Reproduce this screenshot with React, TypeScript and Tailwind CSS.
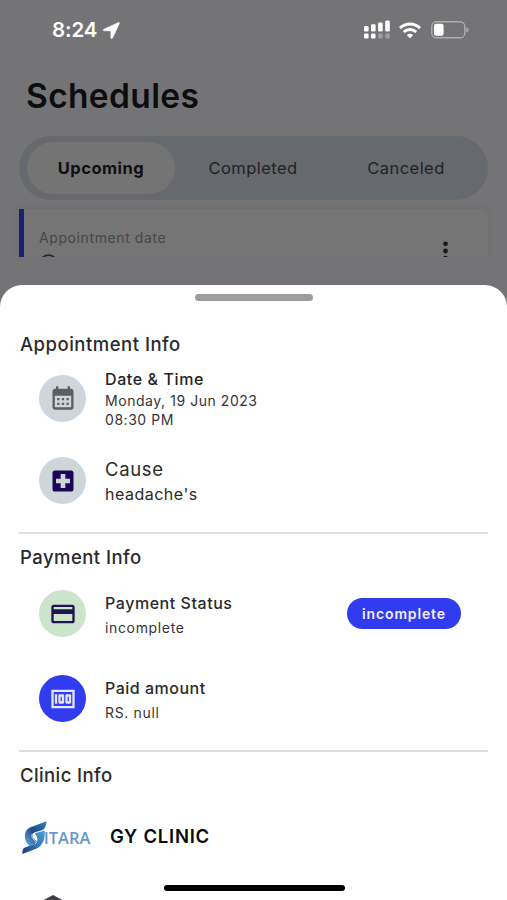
import type { ReactNode } from 'react'
import { MdCalendarMonth, MdLocalHospital, MdMoney, MdPayment } from 'react-icons/md'

const TABS = ['Upcoming', 'Completed', 'Canceled']

function StatusBar() {
  return (
    <div className="flex h-[60px] shrink-0 items-center justify-between pl-[52px] pr-[38px] text-white">
      <div className="flex items-center gap-1.5">
        <span className="text-[20.5px] font-semibold leading-none tracking-[-0.1px]">8:24</span>
        <svg width="17" height="17" viewBox="0 0 17 17" fill="currentColor" stroke="currentColor" strokeWidth=".6">
          <path d="M15.4.6.9 7.2c-1 .5-.8 1.6.3 1.6h6.7v6.8c0 1.1 1.2 1.3 1.7.3L16.3 1.5c.3-.7-.2-1.2-.9-.9Z" />
        </svg>
      </div>
      <div className="flex items-center">
        <svg width="27" height="20" viewBox="0 0 27 20" fill="currentColor">
          <rect x="1" y="6" width="4.6" height="5.6" rx="1.3" />
          <rect x="8" y="4.2" width="4.6" height="7.4" rx="1.3" />
          <rect x="15.1" y="2.4" width="4.6" height="9.2" rx="1.3" />
          <rect x="22.2" y="0.5" width="4.6" height="11.1" rx="1.3" />
          <rect x="1" y="13.6" width="4.6" height="5" rx="1.3" />
          <rect x="8" y="13.6" width="4.6" height="5" rx="1.3" />
          <rect x="15.1" y="13.6" width="4.6" height="5" rx="1.3" opacity=".3" />
          <rect x="22.2" y="13.6" width="4.6" height="5" rx="1.3" opacity=".3" />
        </svg>
        <svg className="ml-[9px]" width="22" height="17" viewBox="0 0 22 17" fill="none" stroke="currentColor" strokeWidth="3">
          <path d="M1 6.1c5.7-5.5 14.3-5.5 20 0" />
          <path d="M4.8 10c3.6-3.4 8.8-3.4 12.4 0" />
          <path d="M7.8 12.9c1.9-1.7 4.5-1.7 6.4 0L11 16.4Z" fill="currentColor" stroke="none" />
        </svg>
        <svg className="ml-2.5" width="38" height="18" viewBox="0 0 38 18" fill="none">
          <rect x=".8" y=".8" width="33" height="16" rx="4.6" stroke="#fff" strokeOpacity=".42" strokeWidth="1.4" />
          <rect x="3" y="2.8" width="9.6" height="12" rx="2.2" fill="#fff" />
          <path d="M35.4 6.3c2.6.9 2.6 4.4 0 5.3Z" fill="#fff" fillOpacity=".45" />
        </svg>
      </div>
    </div>
  )
}

function InfoRow({ color, icon, children }: { color: string; icon: ReactNode; children: ReactNode }) {
  return (
    <div className="flex items-center gap-[19px] pl-[39px] pr-[46px]">
      <span className={`grid size-[47px] shrink-0 place-items-center rounded-full ${color}`}>{icon}</span>
      {children}
    </div>
  )
}

function SitaraLogo() {
  return (
    <svg width="72" height="36" viewBox="0 0 72 36">
      <defs>
        <linearGradient id="top" x1="0" y1="1" x2="1" y2="0">
          <stop offset="0" stopColor="#69b3e3" />
          <stop offset=".5" stopColor="#1d4a87" />
          <stop offset="1" stopColor="#2f83c4" />
        </linearGradient>
        <linearGradient id="bottom" x1="0" y1="1" x2="1" y2="0">
          <stop offset="0" stopColor="#143a75" />
          <stop offset=".5" stopColor="#2f74b3" />
          <stop offset="1" stopColor="#4fa0d8" />
        </linearGradient>
      </defs>
      <path d="M25.5 2.2 9 8.6c-3.5 1.600-5.200 4.500-5.200 8.300 0 4 1.400 7.200 4.700 9.800l6-2c1.600-.8 1.900-2 .6-3.200-2.600-1.800-3.900-3.600-3.500-5.600.3-1.600 1.400-2.300 3.300-2.900l6.600-2.100c2.500-.8 3.700-4.600 4-8.700Z" fill="url(#top)" />
      <path d="m14 14.200 9.700-2.600c.2 5 .1 9.800-3.200 13.800-2 2.500-4.500 4.100-7.500 5.100L1.400 35c-.1-3.500.3-5.700 3-6.700l8.400-3.100c3-1.200 4.200-3.300 3.500-6.200-.4-1.900-1.700-3-2.300-4.800Z" fill="url(#bottom)" />
      <path d="M11.2 15c-1 2.600.2 4.900 3.300 7.200 1.300 1 .9 2-.7 2.800" fill="none" stroke="#d3e8f6" strokeWidth=".9" />
      <text
        x="22.8"
        y="25.4"
        textLength="46.5"
        lengthAdjust="spacingAndGlyphs"
        className="fill-[#6398c8] font-['Open_Sans',sans-serif] text-[16.5px] font-semibold"
      >
        ITARA
      </text>
    </svg>
  )
}

export default function App() {
  return (
    <div className="flex h-[900px] w-[507px] flex-col overflow-hidden bg-[#747476] font-['Inter',sans-serif] text-[#2a2a2c]">
      <div className="flex h-[257px] shrink-0 flex-col overflow-hidden">
        <StatusBar />
        <h1 className="mt-4 shrink-0 pl-[26px] text-[33.5px] font-semibold leading-10 tracking-[0.35px] text-[#0d0d10]">Schedules</h1>

        <div className="mx-[19px] mt-5 flex h-16 shrink-0 rounded-full bg-[#66696d] p-1.5 pl-2">
          {TABS.map((tab, i) => (
            <button
              key={tab}
              className={
                i === 0
                  ? 'w-[148px] rounded-full bg-[#747475] pt-px text-[16.5px] font-bold tracking-[0.5px] text-[#101013]'
                  : 'w-[153px] translate-x-[1.5px] text-[16.5px] tracking-[0.45px] text-[#212226]'
              }
            >
              {tab}
            </button>
          ))}
        </div>

        <div className="mx-[19px] mt-[9px] flex h-20 shrink-0 justify-between rounded-r-lg border-l-[5px] border-[#1d1d72] bg-[#757575] pl-[15px] pr-[39px] shadow-[0_0_8px_rgba(0,0,0,0.08)]">
          <div className="pt-[19px]">
            <p className="text-[14px] leading-5 tracking-[0.6px] text-[#46464a]">Appointment date</p>
            <svg className="mt-[6px]" width="20" height="20" viewBox="0 0 20 20" fill="none" stroke="#28282b" strokeWidth="1.8">
              <circle cx="9.5" cy="9.6" r="8.5" />
            </svg>
          </div>
          <svg className="mt-[32px]" width="6" height="22" viewBox="0 0 6 22" fill="#18181b">
            <circle cx="2.5" cy="2.8" r="2.4" />
            <circle cx="2.5" cy="10" r="2.4" />
            <circle cx="2.5" cy="17.2" r="2.4" />
          </svg>
        </div>
      </div>

      {/* Bottom sheet */}
      <div className="relative mt-[28px] h-[615px] shrink-0 overflow-hidden rounded-t-[22px] bg-white">
        <div className="mx-auto mt-[9px] h-[7px] w-[118px] rounded-full bg-[#9d9d9d]" />

        <h2 className="mt-[31px] pl-5 text-[18.5px] font-medium leading-6 tracking-[0.5px]">Appointment Info</h2>
        <div className="mt-[11px]">
          <InfoRow color="bg-[#cfd6da]" icon={<MdCalendarMonth className="size-7 text-[#5d5e63]" />}>
            <div className="pt-0.5 text-[14px] leading-[19px] tracking-[0.55px] text-[#353537]">
              <p className="mb-[1px] text-[16px] font-medium leading-[21px] tracking-[0.6px] text-[#232325]">Date &amp; Time</p>
              <p>Monday, 19 Jun 2023</p>
              <p>08:30 PM</p>
            </div>
          </InfoRow>
        </div>
        <div className="mt-[25px]">
          <InfoRow color="bg-[#cfd6da]" icon={<MdLocalHospital className="size-7 text-[#1c0659]" />}>
            <div className="pt-0.5">
              <p className="text-[18.5px] leading-[26px] tracking-[0.65px]">Cause</p>
              <p className="text-[16px] leading-[25px] tracking-[0.5px]">headache's</p>
            </div>
          </InfoRow>
        </div>

        <hr className="mx-[19px] mt-[25px] border-t-2 border-[#dedee0]" />
        <h2 className="mt-[11px] pl-5 text-[18.5px] font-medium leading-6 tracking-[0.45px]">Payment Info</h2>
        <div className="mt-[18px]">
          <InfoRow color="bg-[#cce4cc]" icon={<MdPayment className="size-7 text-[#1e1450]" />}>
            <div className="grow pt-1">
              <p className="text-[16px] font-medium leading-[25px] tracking-[0.55px]">Payment Status</p>
              <p className="text-[14px] leading-6 tracking-[0.65px] text-[#353537]">incomplete</p>
            </div>
            <span className="grid h-[31px] w-[114px] place-items-center rounded-full bg-[#313bef] text-[14px] font-semibold tracking-[0.85px] text-[#f0f0ff]">
              incomplete
            </span>
          </InfoRow>
        </div>
        <div className="mt-[32px]">
          <InfoRow color="bg-[#313bef]" icon={<MdMoney className="size-7 text-[#e2e5ff]" />}>
            <div className="pt-1">
              <p className="text-[16px] font-medium leading-[25px] tracking-[0.5px]">Paid amount</p>
              <p className="text-[14px] leading-6 tracking-[0.65px] text-[#353537]">RS. null</p>
            </div>
          </InfoRow>
        </div>

        <hr className="mx-[19px] mt-[25px] border-t-2 border-[#dedee0]" />
        <h2 className="mt-[11px] pl-5 text-[18.5px] font-medium leading-6 tracking-[0.4px]">Clinic Info</h2>
        <div className="mt-[32px] flex h-9 items-center gap-[17px] pl-[21px]">
          <SitaraLogo />
          <p className="text-[18.5px] font-semibold tracking-[0.75px] text-[#0b0b0d]">GY CLINIC</p>
        </div>
        <svg className="ml-[38px] mt-[39px]" width="30" height="20" viewBox="0 0 30 20" fill="#414145">
          <path d="M15 1 30 9v11H0V9Z" />
        </svg>

        <div className="absolute bottom-[9px] left-[164px] h-[6px] w-[181px] rounded-full bg-black" />
      </div>
    </div>
  )
}
